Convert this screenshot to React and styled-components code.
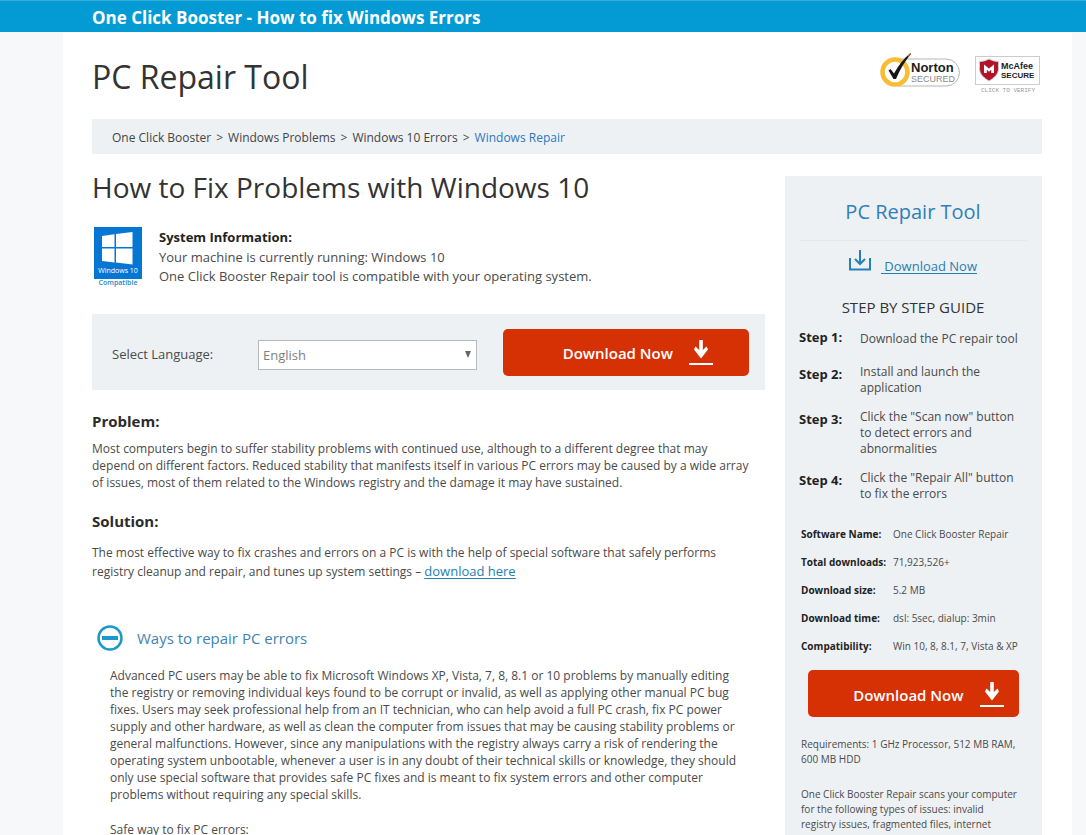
import React, { useState } from "react";
import styled, { createGlobalStyle } from "styled-components";

const GlobalStyle = createGlobalStyle`
  * {
    box-sizing: border-box;
  }

  body {
    margin: 0;
    background: #f7f8f9;
    color: #4a4a4a;
    font-family: "Open Sans", "Noto Sans", sans-serif;
    font-size: 12px;
    line-height: 17px;
  }

  h1, h2, h3, h4, p, ol, dl, dd {
    margin: 0;
    padding: 0;
  }
`;

const TopBar = styled.header`
  height: 32px;
  padding-left: 92px;
  border-top: 1px solid #35aedb;
  background: #049ad3;
  color: #fff;
  font-size: 17px;
  font-weight: 700;
  line-height: 33px;
`;

const Sheet = styled.div`
  margin: 0 14px 0 63px;
  padding: 0 30px 0 29px;
  background: #fff;
`;

const Masthead = styled.div`
  display: flex;
  justify-content: space-between;
  height: 87px;
  padding-top: 20px;
`;

const SiteTitle = styled.h1`
  color: #333;
  font-size: 32px;
  font-weight: 400;
  line-height: 50px;
`;

const Badges = styled.div`
  display: flex;
  gap: 14px;
`;

const Breadcrumb = styled.nav`
  display: flex;
  align-items: center;
  gap: 5px;
  height: 35px;
  padding: 2px 20px 0;
  background: #edf1f4;
`;

const Crumb = styled.a`
  color: ${(props) => (props.$current ? "#2c77bd" : "#444")};
  text-decoration: none;
`;

const Columns = styled.div`
  display: grid;
  grid-template-columns: minmax(0, 1fr) 257px;
  gap: 20px;
  align-items: start;
`;

const Main = styled.main`
  padding-top: 10px;
`;

const PageTitle = styled.h2`
  color: #333;
  font-size: 28px;
  font-weight: 400;
  line-height: 46px;
`;

const SystemInfo = styled.div`
  display: flex;
  gap: 17px;
  padding: 17px 0 26px 2px;
  font-size: 13px;
  line-height: 19px;
`;

const SystemTitle = styled.h3`
  padding: 1px 0;
  color: #222;
  font-size: 13px;
  font-weight: 700;
`;

const LanguageBar = styled.div`
  display: flex;
  align-items: center;
  height: 76px;
  padding: 0 16px 0 20px;
  background: #edf1f4;
`;

const LanguageField = styled.div`
  display: flex;
  flex: 1;
  align-items: center;
  padding-top: 5px;
`;

const LanguageLabel = styled.label`
  width: 146px;
  font-size: 13px;
`;

const SelectWrap = styled.div`
  position: relative;
  flex: 1;
  margin-right: 26px;

  &::after {
    content: "";
    position: absolute;
    right: 6px;
    top: 11px;
    border: 3px solid transparent;
    border-top: 7px solid #666;
    border-bottom: 0;
    pointer-events: none;
  }
`;

const Select = styled.select`
  display: block;
  width: 100%;
  height: 30px;
  padding: 0 4px;
  border: 1px solid #b5b9bc;
  border-radius: 0;
  appearance: none;
  background: #fff;
  color: #808080;
  font-family: inherit;
  font-size: 13px;
`;

const DownloadButton = styled.button`
  display: flex;
  align-items: center;
  justify-content: flex-end;
  gap: 16px;
  width: ${(props) => props.$width};
  height: 47px;
  margin: ${(props) => props.$margin || "0"};
  padding: 2px ${(props) => props.$inset} 0 0;
  border: 0;
  border-radius: 5px;
  background: #d63005;
  color: #fff;
  font-family: inherit;
  font-size: 15px;
  font-weight: 600;
  cursor: pointer;
`;

const SectionTitle = styled.h3`
  margin-top: ${(props) => props.$top};
  color: #2b2b2b;
  font-size: 15px;
  font-weight: 700;
  line-height: 22px;
`;

const Text = styled.p`
  margin-top: ${(props) => props.$top};
  padding-right: 13px;
  line-height: ${(props) => props.$line || "17px"};
`;

const Link = styled.a`
  color: #2580b0;
  font-size: 13px;
  text-underline-offset: 2px;
`;

const Toggle = styled.button`
  display: flex;
  align-items: center;
  gap: 14px;
  margin-top: 44px;
  padding: 0 0 0 5px;
  border: 0;
  background: none;
  color: #3f83b0;
  font-family: inherit;
  font-size: 15px;
  cursor: pointer;
`;

const Details = styled.div`
  padding: 16px 10px 20px 18px;
`;

const Sidebar = styled.aside`
  margin-top: 22px;
  padding: 18px 15px 20px 14px;
  background: #edf1f4;
`;

const SidebarTitle = styled.h2`
  padding-bottom: 11px;
  border-bottom: 1px solid #e3e7ea;
  color: #2f80b9;
  font-size: 20px;
  font-weight: 400;
  line-height: 35px;
  text-align: center;
`;

const SidebarLink = styled.div`
  display: flex;
  align-items: baseline;
  justify-content: center;
  gap: 10px;
  height: 46px;
  padding-top: 9px;
`;

const GuideTitle = styled.h3`
  margin: 10px 0;
  color: #333;
  font-size: 15px;
  font-weight: 400;
  line-height: 20px;
  text-align: center;
`;

const Steps = styled.ol`
  display: grid;
  gap: 13px;
  list-style: none;
`;

const Step = styled.li`
  display: grid;
  grid-template-columns: 61px 1fr;
  min-height: 24px;
  line-height: 16px;

  span {
    align-self: center;
  }
`;

const StepName = styled.strong`
  padding-top: 2px;
  color: #222;
  font-size: 13px;
`;

const Facts = styled.dl`
  display: grid;
  grid-template-columns: 92px 1fr;
  row-gap: 12px;
  margin: 24px 0 16px 2px;
  font-size: 10px;
  line-height: 16px;
  white-space: nowrap;

  dt {
    color: #222;
    font-weight: 700;
  }
`;

const SmallText = styled.p`
  margin: 20px 6px 0 2px;
  font-size: 10px;
  line-height: 15px;
`;

const LogoText = styled.text`
  font-family: "Liberation Sans", Arial, sans-serif;
  font-weight: ${(props) => props.$weight || 400};
`;

const NortonBadge = () => (
  <svg width="80" height="40" viewBox="0 0 80 40" role="img" aria-label="Norton Secured">
    <path d="M18 7H66a13.500 13.500 0 0 1 0 27H18" fill="#fff" stroke="#b5b5b5" />
    <circle cx="15" cy="20" r="12.500" fill="#fff" stroke="#f8bd35" strokeWidth="4.500" />
    <path d="M8.500 18.500l2-1.500 3.500 4.500C18 14 23.500 6.500 30.500 1l.5 1C25 9 20 17.500 16 27h-2.500z" fill="#161616" />
    <path d="M27.500 4l3-3 .5 1-2.500 3z" fill="#c8683a" />
    <LogoText x="31" y="20" fontSize="13" $weight={700} fill="#1c1c1c">Norton</LogoText>
    <LogoText x="31" y="30" fontSize="9" fill="#8a8a8a">SECURED</LogoText>
  </svg>
);

const McAfeeBadge = () => (
  <svg width="68" height="42" viewBox="0 0 68 42" role="img" aria-label="McAfee Secure">
    <rect x="1.500" y="4.500" width="64" height="28" fill="#fff" stroke="#ccc" />
    <path d="M5.500 9.500q5 0 9.500-2.500 4.500 2.500 9.500 2.500v7c0 6-4.500 9.500-9.500 12.500-5-3-9.500-6.500-9.500-12.500z" fill="#b3122b" stroke="#ccc" strokeWidth="1" />
    <path d="M10 21v-8.500l5 4 5-4V21h-2.800v-3.200L15 19.700l-2.200-1.900V21z" fill="#fff" />
    <LogoText x="27" y="17" fontSize="9" $weight={700} fill="#1c1c1c">McAfee</LogoText>
    <LogoText x="27" y="26" fontSize="8" $weight={700} fill="#1c1c1c">SECURE</LogoText>
    <text x="7" y="40" fontSize="6" fontFamily="Liberation Mono, monospace" fill="#999">CLICK TO VERIFY</text>
  </svg>
);

const WindowsBadge = () => (
  <svg width="48" height="61" viewBox="0 0 48 61" role="img" aria-label="Windows 10 compatible">
    <rect width="48" height="52" fill="#0477d4" />
    <path d="M8 9l12.500-1.700V20H8zM22 7L38.500 5V20H22zM8 21.500h12.500v14L8 34zM22 21.500H38.500V37.500L22 35.600z" fill="#fff" />
    <text x="24" y="46" fontSize="7" fill="#fff" textAnchor="middle">Windows 10</text>
    <text x="24" y="58" fontSize="7" fontWeight="600" fill="#2485d0" textAnchor="middle">Compatible</text>
  </svg>
);

const ArrowIcon = () => (
  <svg width="24" height="26" viewBox="0 0 24 26" aria-hidden="true">
    <path d="M10.200 0h3.600v10l3.700-3.500 1.500 3L12 18.500 5 9.500l1.500-3 3.700 3.500z" fill="#fff" />
    <path d="M0 23h24v2H0z" fill="#fff" />
  </svg>
);

const TrayIcon = () => (
  <svg width="22" height="21" viewBox="0 0 22 21" fill="none" stroke="#2580b8" strokeWidth="2" aria-hidden="true">
    <path d="M1 8v11.500h20V8" />
    <path d="M11 0v14M6 9l5 5 5-5" />
  </svg>
);

const CollapseIcon = () => (
  <svg width="26" height="26" viewBox="0 0 26 26" fill="none" stroke="#1c98cb" aria-hidden="true">
    <circle cx="13" cy="13" r="11.500" strokeWidth="2.500" />
    <path d="M5 13h16" strokeWidth="4" />
  </svg>
);

const crumbs = ["One Click Booster", "Windows Problems", "Windows 10 Errors", "Windows Repair"];

const steps = [
  "Download the PC repair tool",
  "Install and launch the application",
  'Click the "Scan now" button to detect errors and abnormalities',
  'Click the "Repair All" button to fix the errors',
];

const facts = [
  ["Software Name:", "One Click Booster Repair"],
  ["Total downloads:", "71,923,526+"],
  ["Download size:", "5.2 MB"],
  ["Download time:", "dsl: 5sec, dialup: 3min"],
  ["Compatibility:", "Win 10, 8, 8.1, 7, Vista & XP"],
];

const App = () => {
  const [language, setLanguage] = useState("English");
  const [open, setOpen] = useState(true);

  return (
    <>
      <GlobalStyle />
      <TopBar>One Click Booster - How to fix Windows Errors</TopBar>
      <Sheet>
        <Masthead>
          <SiteTitle>PC Repair Tool</SiteTitle>
          <Badges>
            <NortonBadge />
            <McAfeeBadge />
          </Badges>
        </Masthead>

        <Breadcrumb aria-label="Breadcrumb">
          {crumbs.map((crumb, i) => (
            <React.Fragment key={crumb}>
              {i > 0 && <span>&gt;</span>}
              <Crumb href="#" $current={i === crumbs.length - 1}>{crumb}</Crumb>
            </React.Fragment>
          ))}
        </Breadcrumb>

        <Columns>
          <Main>
            <PageTitle>How to Fix Problems with Windows 10</PageTitle>
            <SystemInfo>
              <WindowsBadge />
              <div>
                <SystemTitle>System Information:</SystemTitle>
                <p>Your machine is currently running: Windows 10</p>
                <p>One Click Booster Repair tool is compatible with your operating system.</p>
              </div>
            </SystemInfo>

            <LanguageBar>
              <LanguageField>
                <LanguageLabel htmlFor="language">Select Language:</LanguageLabel>
                <SelectWrap>
                  <Select id="language" value={language} onChange={(e) => setLanguage(e.target.value)}>
                    <option>English</option>
                    <option>Deutsch</option>
                    <option>Français</option>
                  </Select>
                </SelectWrap>
              </LanguageField>
              <DownloadButton type="button" $width="246px" $inset="36px">
                Download Now
                <ArrowIcon />
              </DownloadButton>
            </LanguageBar>

            <SectionTitle $top="20px">Problem:</SectionTitle>
            <Text $top="8px">
              Most computers begin to suffer stability problems with continued use, although to a different degree that may
              depend on different factors. Reduced stability that manifests itself in various PC errors may be caused by a wide
              array of issues, most of them related to the Windows registry and the damage it may have sustained.
            </Text>

            <SectionTitle $top="19px">Solution:</SectionTitle>
            <Text $top="11px" $line="19px">
              The most effective way to fix crashes and errors on a PC is with the help of special software that safely performs
              registry cleanup and repair, and tunes up system settings – <Link href="#">download here</Link>
            </Text>

            <Toggle type="button" aria-expanded={open} onClick={() => setOpen(!open)}>
              <CollapseIcon />
              Ways to repair PC errors
            </Toggle>
            {open && (
              <Details>
                <Text>
                  Advanced PC users may be able to fix Microsoft Windows XP, Vista, 7, 8, 8.1 or 10 problems by manually editing
                  the registry or removing individual keys found to be corrupt or invalid, as well as applying other manual PC
                  bug fixes. Users may seek professional help from an IT technician, who can help avoid a full PC crash, fix PC
                  power supply and other hardware, as well as clean the computer from issues that may be causing stability
                  problems or general malfunctions. However, since any manipulations with the registry always carry a risk of
                  rendering the operating system unbootable, whenever a user is in any doubt of their technical skills or
                  knowledge, they should only use special software that provides safe PC fixes and is meant to fix system errors
                  and other computer problems without requiring any special skills.
                </Text>
                <Text $top="18px">Safe way to fix PC errors:</Text>
              </Details>
            )}
          </Main>

          <Sidebar>
            <SidebarTitle>PC Repair Tool</SidebarTitle>
            <SidebarLink>
              <TrayIcon />
              <Link href="#">&nbsp;Download Now</Link>
            </SidebarLink>
            <GuideTitle>STEP BY STEP GUIDE</GuideTitle>
            <Steps>
              {steps.map((step, i) => (
                <Step key={step}>
                  <StepName>Step {i + 1}:</StepName>
                  <span>{step}</span>
                </Step>
              ))}
            </Steps>
            <Facts>
              {facts.map(([name, value]) => (
                <React.Fragment key={name}>
                  <dt>{name}</dt>
                  <dd>{value}</dd>
                </React.Fragment>
              ))}
            </Facts>
            <DownloadButton type="button" $width="211px" $margin="0 auto" $inset="15px">
              Download Now
              <ArrowIcon />
            </DownloadButton>
            <SmallText>Requirements: 1 GHz Processor, 512 MB RAM, 600 MB HDD</SmallText>
            <SmallText>
              One Click Booster Repair scans your computer for the following types of issues: invalid registry issues,
              fragmented files, internet connection settings, windows tweaks and unwanted programs.
            </SmallText>
          </Sidebar>
        </Columns>
      </Sheet>
    </>
  );
};

export default App;
